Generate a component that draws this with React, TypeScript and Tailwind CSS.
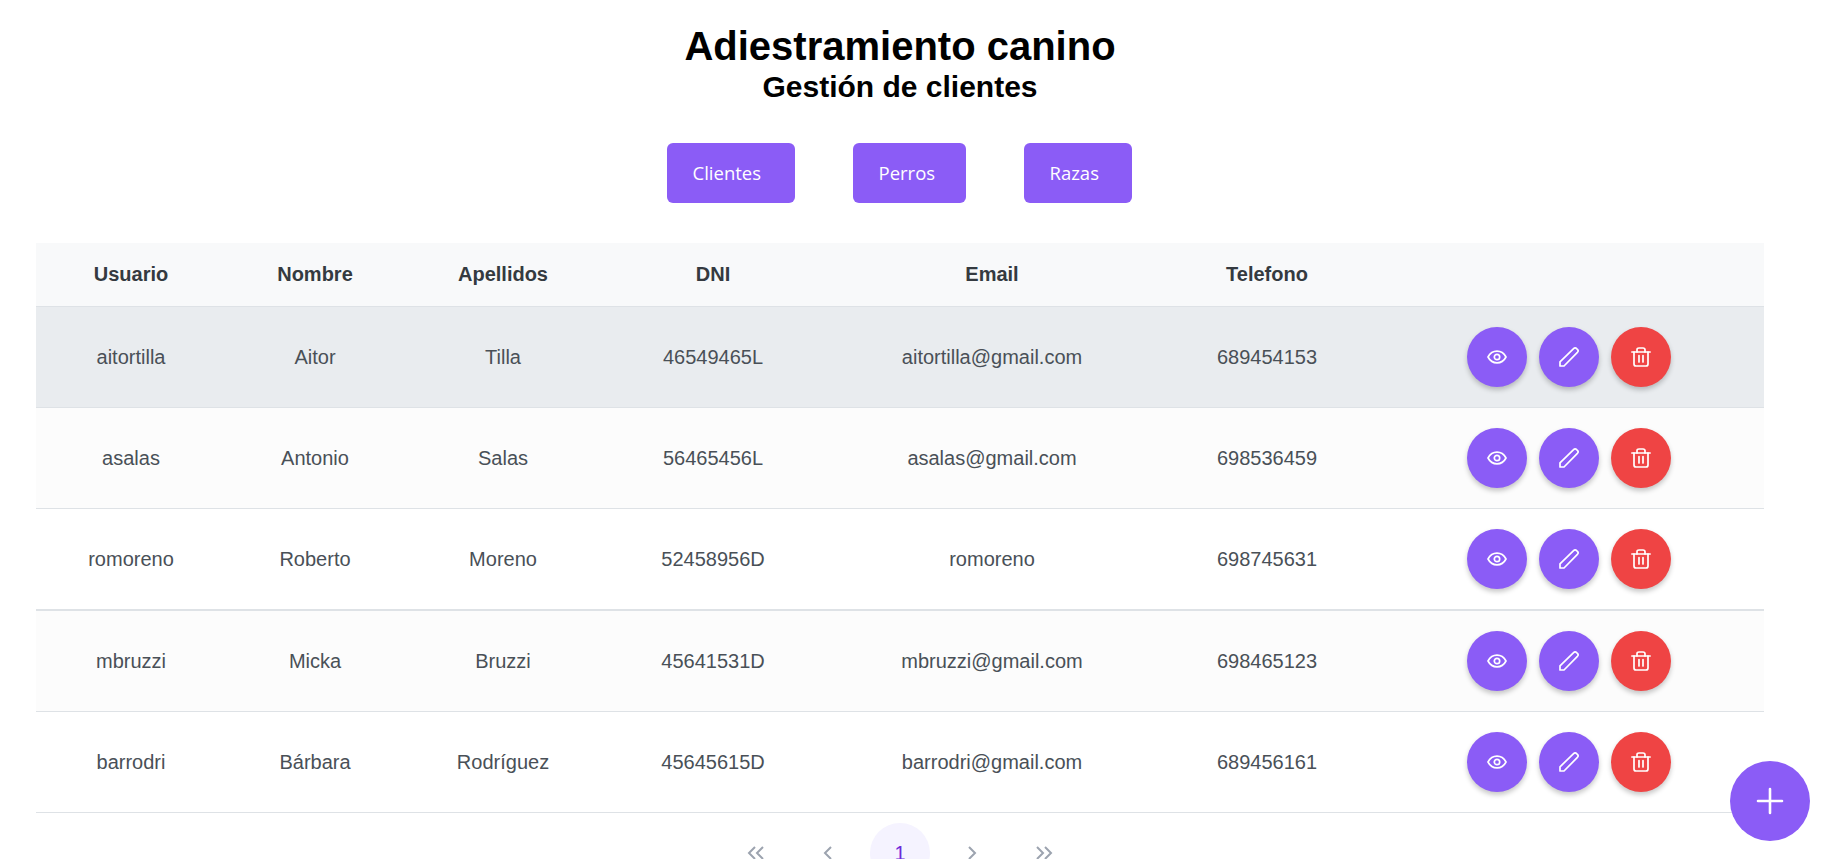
const rows = [
  ["aitortilla", "Aitor", "Tilla", "46549465L", "aitortilla@gmail.com", "689454153", "bg-[#e9ecef] h-[101px] border-b"],
  ["asalas", "Antonio", "Salas", "56465456L", "asalas@gmail.com", "698536459", "bg-[#fcfcfc] h-[101px] border-b"],
  ["romoreno", "Roberto", "Moreno", "52458956D", "romoreno", "698745631", "bg-white h-[102px] border-b-2"],
  ["mbruzzi", "Micka", "Bruzzi", "45641531D", "mbruzzi@gmail.com", "698465123", "bg-[#fcfcfc] h-[101px] border-b"],
  ["barrodri", "Bárbara", "Rodríguez", "45645615D", "barrodri@gmail.com", "689456161", "bg-white h-[101px] border-b"],
];

const Eye = () => (
  <svg width="20" height="20" viewBox="0 0 20 20" fill="none" stroke="white" strokeWidth="1.7">
    <path d="M1 10c2-3.800 5.200-5.900 9-5.900s7 2.100 9 5.900c-2 3.800-5.200 5.900-9 5.900S3 13.800 1 10Z" strokeLinejoin="round" />
    <circle cx="10" cy="10" r="2.700" />
  </svg>
);
const Pencil = () => (
  <svg width="20" height="20" viewBox="0 0 20 20" fill="none" stroke="white" strokeWidth="1.7" strokeLinejoin="round">
    <path d="M1 19v-4.200L14.600 1.600c.9-.9 2.200-.9 3 0l.8.8c.9.9.9 2.100 0 3L5 19H1Z" />
  </svg>
);
const Trash = () => (
  <svg width="20" height="20" viewBox="0 0 20 20" fill="none" stroke="white" strokeWidth="1.7" strokeLinecap="round" strokeLinejoin="round">
    <path d="M0.800 5h18.400" />
    <path d="M3 5v12c0 1.200.8 2 2 2h10c1.200 0 2-.8 2-2V5" />
    <path d="M6 5V2.800C6 1.600 6.800 1 8 1h4c1.200 0 2 .6 2 1.800V5" />
    <path d="M8 8.500v6.500M12 8.500v6.500" />
  </svg>
);

const Round = ({ red, children }: { red?: boolean; children: React.ReactNode }) => (
  <button
    className={
      "w-[60px] h-[60px] rounded-full flex items-center justify-center shadow-[0_3px_5px_rgba(0,0,0,0.22)] " +
      (red ? "bg-[#ef4444]" : "bg-[#8b5cf6]")
    }
  >
    {children}
  </button>
);

const Chev = ({ d }: { d: string }) => (
  <svg width="18" height="18" viewBox="0 0 18 18" fill="none" stroke="#9ca3af" strokeWidth="2">
    <path d={d} />
  </svg>
);

const cols = ["w-[190px]", "w-[178px]", "w-[198px]", "w-[222px]", "w-[336px]", "w-[214px]", "w-[390px]"];
const heads = ["Usuario", "Nombre", "Apellidos", "DNI", "Email", "Telefono", ""];
const navs = [
  ["Clientes", "w-[128px]"],
  ["Perros", "w-[113px]"],
  ["Razas", "w-[108px]"],
];

export default function App() {
  return (
    <div className="h-screen overflow-hidden bg-white pl-[36px] pr-[61px] font-['Liberation_Sans',sans-serif]">
      <div className="pt-[23px] text-center text-black font-bold">
        <h1 className="text-[40px] leading-[47px]">Adiestramiento canino</h1>
        <h2 className="text-[30px] leading-[33px]">Gestión de clientes</h2>
      </div>
      <div className="mt-[40px] pr-[2px] flex justify-center gap-[58px] text-white text-[18.500px] font-['Open_Sans',sans-serif]">
        {navs.map(([b, w]) => (
          <button key={b} className={"h-[60px] pl-[26px] text-left rounded-[6px] bg-[#8b5cf6] " + w}>
            {b}
          </button>
        ))}
      </div>
      <div className="mt-[40px]">
        <table className="w-full table-fixed border-collapse text-[20px]">
          <colgroup>
            {cols.map((c, i) => (
              <col key={i} className={c} />
            ))}
          </colgroup>
          <thead>
            <tr className="h-[63px] bg-[#f8f9fa] border-b border-[#dee2e6] text-[#343a40]">
              {heads.map((h, i) => (
                <th key={i} className="font-bold text-center">
                  {h}
                </th>
              ))}
            </tr>
          </thead>
          <tbody>
            {rows.map((r) => (
              <tr key={r[0]} className={"border-[#dee2e6] text-[#495057] " + r[6]}>
                {r.slice(0, 6).map((c, i) => (
                  <td key={i} className="text-center">
                    {c}
                  </td>
                ))}
                <td>
                  <div className="flex justify-center gap-[12px]">
                    <Round><Eye /></Round>
                    <Round><Pencil /></Round>
                    <Round red><Trash /></Round>
                  </div>
                </td>
              </tr>
            ))}
          </tbody>
        </table>
        <div className="mt-[10px] flex justify-center items-center gap-[12px] h-[60px] text-[20px]">
          <span className="w-[60px] flex justify-center"><Chev d="M8 3 2 9l6 6M16 3l-6 6 6 6" /></span>
          <span className="w-[60px] flex justify-center"><Chev d="M12 3 6 9l6 6" /></span>
          <span className="w-[60px] h-[60px] rounded-full bg-[#f5f3ff] text-[#6d28d9] flex items-center justify-center">1</span>
          <span className="w-[60px] flex justify-center"><Chev d="m6 3 6 6-6 6" /></span>
          <span className="w-[60px] flex justify-center"><Chev d="m2 3 6 6-6 6M10 3l6 6-6 6" /></span>
        </div>
      </div>
      <button className="fixed right-[15px] bottom-[18px] w-[80px] h-[80px] rounded-full bg-[#8b5cf6] flex items-center justify-center">
        <svg width="28" height="28" viewBox="0 0 28 28" stroke="white" strokeWidth="2.600" strokeLinecap="round">
          <path d="M14 2v24M2 14h24" />
        </svg>
      </button>
    </div>
  );
}
